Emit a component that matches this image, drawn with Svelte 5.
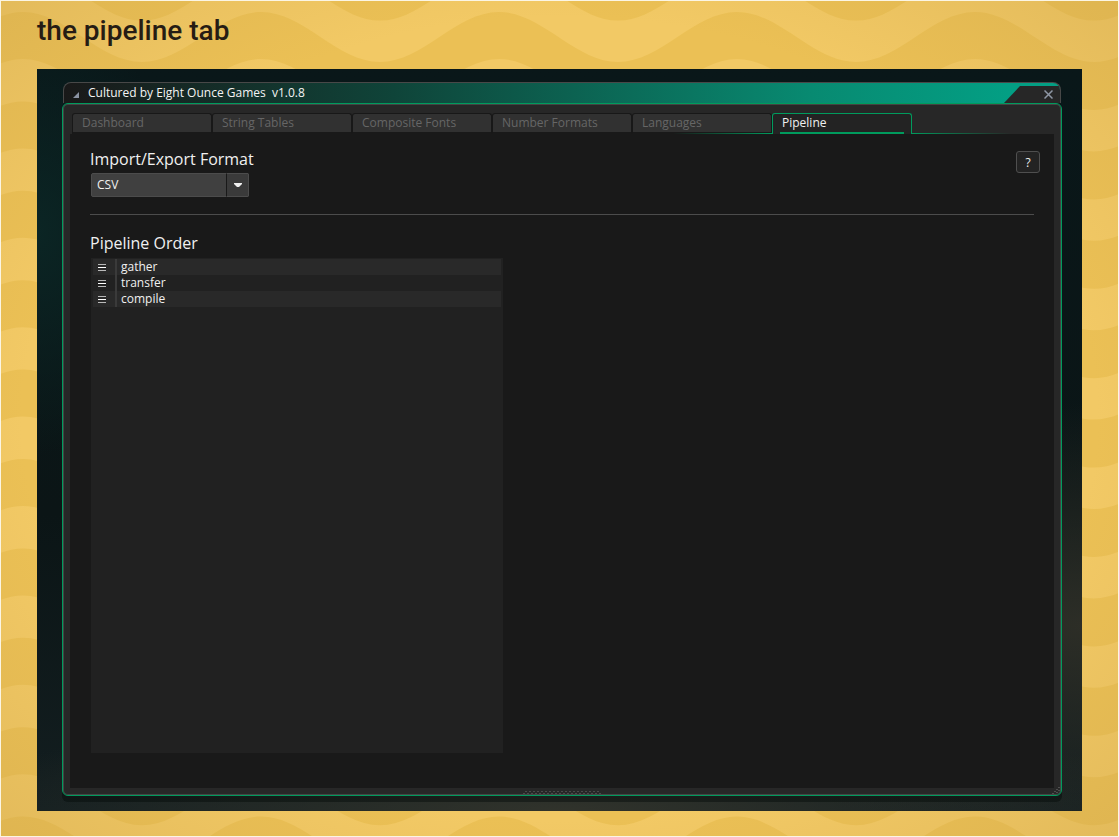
<script>
  const tabs = ['Dashboard', 'String Tables', 'Composite Fonts', 'Number Formats', 'Languages', 'Pipeline'];
  let active = $state('Pipeline');
  let format = $state('CSV');
  const steps = ['gather', 'transfer', 'compile'];

  const period = 238;
  const half = period / 2;

  // One wavy band: the upper edge runs left to right, the lower edge is a copy of it, shifted down.
  function edge(x0, crest, trough, count) {
    let d = '';
    for (let i = 0; i < count; i++) {
      const x = x0 + i * period;
      d += `C${x + 43} ${crest} ${x + half - 43} ${trough} ${x + half} ${trough}`;
      d += `C${x + half + 43} ${trough} ${x + period - 43} ${crest} ${x + period} ${crest}`;
    }
    return d;
  }
  function edgeBack(x1, crest, trough, count) {
    let d = '';
    for (let i = 0; i < count; i++) {
      const x = x1 - i * period;
      d += `C${x - 43} ${crest} ${x - half + 43} ${trough} ${x - half} ${trough}`;
      d += `C${x - half - 43} ${trough} ${x - period + 43} ${crest} ${x - period} ${crest}`;
    }
    return d;
  }
  const repeats = 14;
  const start = 23 - period;
  const end = start + repeats * period;
  const band = `M${start} 12${edge(start, 12, 62, repeats)}L${end} 59${edgeBack(end, 59, 110, repeats)}Z`;
  const bands = Array.from({ length: 26 }, (_, i) => (i - 1) * 89.4);
</script>

<div class="page">
  <svg class="waves" aria-hidden="true">
    {#each bands as y}
      <path d={band} transform={`translate(0 ${y})`} fill="#ebc055" />
    {/each}
  </svg>

  <h1>the pipeline tab</h1>

  <main class="stage">
    <section class="window">
      <header class="titlebar">
        <svg class="fold" width="6" height="6" viewBox="0 0 6 6" aria-hidden="true"><path d="M6 0V6H0Z" fill="#8b93a3" /></svg>
        <span class="caption">Cultured by Eight Ounce Games&nbsp; v1.0.8</span>
        <div class="corner">
          <button class="close" aria-label="Close">
            <svg width="9" height="9" viewBox="0 0 9 9"><path d="M.5.5L8.5 8.5M8.5.5L.5 8.5" stroke="#8f97a5" stroke-width="1.5" /></svg>
          </button>
        </div>
      </header>

      <div class="frame">
        <div class="tabs" role="tablist">
          {#each tabs as tab}
            <button class="tab" class:active={tab === active} role="tab" aria-selected={tab === active} onclick={() => (active = tab)}>{tab}</button>
          {/each}
        </div>

        <div class="panel">
          <div class="top">
            <div class="field">
              <label for="format">Import/Export Format</label>
              <div class="combo">
                <select id="format" bind:value={format}>
                  <option>CSV</option>
                  <option>JSON</option>
                </select>
                <span class="arrow">
                  <svg width="8" height="5" viewBox="0 0 8 5" aria-hidden="true"><path d="M0 0H8V1L5 4H3L0 1Z" fill="#f0f0f0" /></svg>
                </span>
              </div>
            </div>
            <button class="help" aria-label="Help">?</button>
          </div>

          <hr />

          <h2>Pipeline Order</h2>
          <ul class="order">
            {#each steps as step}
              <li>
                <button class="grip" aria-label={`Move ${step}`}>
                  <svg width="8" height="7" viewBox="0 0 8 7"><path d="M0 .5H8M0 6.5H8" stroke="#b9b9b9" /><path d="M0 3.5H8" stroke="#fff" /></svg>
                </button>
                <span>{step}</span>
              </li>
            {/each}
          </ul>
        </div>

        <svg class="grip-bottom" width="78" height="3" viewBox="0 0 78 3" aria-hidden="true">
          <path d="M2 .5H78" stroke="#4a4a4a" stroke-dasharray="2 2" />
          <path d="M0 2.5H78" stroke="#4a4a4a" stroke-dasharray="2 2" />
        </svg>
        <svg class="grip-corner" width="8" height="7" viewBox="0 0 8 7" aria-hidden="true">
          <path d="M6 0h2v1H6zM4 2h2v1H4zM2 4h2v1H2zM0 6h2v1H0zM6 3h2v1H6zM4 5h2v1H4z" fill="#4e4e4e" />
        </svg>
      </div>
    </section>
  </main>
</div>

<style>
  :global(body) {
    margin: 0;
  }
  .page {
    position: relative;
    isolation: isolate;
    box-sizing: border-box;
    min-height: 100vh;
    display: flex;
    flex-direction: column;
    padding: 0 37px 26px;
    background: #f2c965;
    font-family: "Open Sans", "Noto Sans", sans-serif;
    font-size: 12px;
    color: #f0f0f0;
  }
  .waves {
    position: absolute;
    inset: 0;
    width: 100%;
    height: 100%;
    z-index: -2;
  }
  .page::before {
    content: "";
    position: absolute;
    inset: 0;
    z-index: -1;
    border: 1px solid #fbf5e4;
    background: radial-gradient(ellipse at center, transparent 68%, rgba(205, 165, 75, 0.4) 100%);
  }
  button,
  select {
    font: inherit;
    color: inherit;
    margin: 0;
    padding: 0;
    border: 0;
    background: none;
  }
  h1 {
    margin: 0;
    height: 69px;
    line-height: 62px;
    font-family: Roboto, "Open Sans", sans-serif;
    font-weight: 500;
    font-size: 28px;
    color: #261c14;
  }
  .stage {
    flex: 1;
    display: flex;
    padding: 13px 20px 15px 25px;
    background:
      radial-gradient(ellipse 40% 30% at 100% 75%, rgba(48, 48, 40, 0.9), transparent),
      radial-gradient(ellipse 60% 14% at 50% 100%, rgba(50, 52, 44, 0.95), transparent),
      radial-gradient(ellipse 14% 30% at 0 22%, #0b2524, transparent),
      linear-gradient(#091719, #0b1516 60%, #131e20);
  }
  .window {
    flex: 1;
    min-width: 0;
    display: flex;
    flex-direction: column;
  }
  .titlebar {
    display: flex;
    align-items: center;
    height: 21px;
    box-sizing: border-box;
    margin: 0 1px;
    padding-left: 9px;
    border: 1px solid #484848;
    border-bottom: 0;
    border-radius: 8px 8px 0 0;
    background: linear-gradient(90deg, #191919, #0f4439 33%, #088a71 75%, #039f84 95%);
    overflow: hidden;
  }
  .fold {
    margin: 4px 9px 0 0;
  }
  .caption {
    flex: 1;
    line-height: 20px;
    color: #f4f4f4;
  }
  .corner {
    align-self: flex-end;
    display: flex;
    justify-content: flex-end;
    width: 56px;
    height: 17px;
    background: #272727;
    clip-path: polygon(16px 0, 100% 0, 100% 100%, 0 100%);
  }
  .close {
    display: flex;
    align-items: center;
    justify-content: center;
    width: 23px;
    height: 17px;
  }
  .frame {
    position: relative;
    flex: 1;
    display: flex;
    flex-direction: column;
    padding: 9px 7px 7px;
    border: 1px solid #009b5d;
    border-radius: 6px;
    background: #272727;
    box-shadow: inset 0 0 0 1px #444, 0 6px 0 rgba(5, 10, 8, 0.45);
  }
  .tabs {
    display: flex;
    height: 21px;
    padding: 0 2px;
  }
  .tab {
    position: relative;
    width: 140px;
    height: 21px;
    box-sizing: border-box;
    padding-left: 9px;
    text-align: left;
    line-height: 18px;
    color: #666;
    background: #313131;
    border: 1px solid #181818;
    border-radius: 3px 3px 0 0;
    border-bottom: 2px solid #191919;
  }
  .tab.active {
    padding-bottom: 2px;
    color: #f0f0f0;
    background: linear-gradient(#009b5d, #009b5d) 7px 100% / calc(100% - 14px) 2px no-repeat #232323;
    border-color: #009b5d;
    border-bottom: 0;
  }
  .tab.active::before,
  .tab.active::after {
    content: "";
    position: absolute;
    bottom: 0;
    height: 1px;
    width: 100px;
  }
  .tab.active::before {
    right: 100%;
    background: linear-gradient(90deg, transparent, #009b5d);
  }
  .tab.active::after {
    left: 100%;
    background: linear-gradient(270deg, transparent, #009b5d);
  }
  .panel {
    flex: 1;
    display: flex;
    flex-direction: column;
    padding: 13px 14px 35px 20px;
    background: #191919;
  }
  .top {
    display: flex;
    justify-content: space-between;
    align-items: flex-start;
  }
  .field {
    display: flex;
    flex-direction: column;
  }
  label,
  h2 {
    margin: 0;
    font-size: 16px;
    font-weight: 400;
    line-height: 24px;
  }
  .combo {
    display: grid;
    grid-template-columns: 135px 23px;
    height: 24px;
    margin: 2px 1px 1px;
  }
  select {
    grid-area: 1 / 1 / 2 / 3;
    appearance: none;
    box-sizing: border-box;
    padding: 0 0 2px 5px;
    border: 1px solid #4c4c4c;
    border-radius: 2px;
    background: #404040;
  }
  .arrow {
    grid-area: 1 / 2;
    display: flex;
    align-items: center;
    justify-content: center;
    border: 1px solid #4c4c4c;
    border-left: 1px solid #191919;
    border-radius: 0 2px 2px 0;
    background: #3a3a3a;
    pointer-events: none;
    box-sizing: border-box;
  }
  .help {
    width: 24px;
    height: 22px;
    margin-top: 4px;
    border: 1px solid #4f4f4f;
    border-radius: 3px;
    background: #232323;
  }
  hr {
    width: calc(100% - 6px);
    margin: 16px 6px 16px 0;
    border: 0;
    border-top: 1px solid #4c4c4c;
  }
  .order {
    flex: 1;
    box-sizing: border-box;
    width: 412px;
    max-width: 100%;
    margin: 3px 1px 0;
    padding: 1px 2px;
    list-style: none;
    background: #212121;
    font-size: 12px;
  }
  li {
    display: flex;
    height: 16px;
    line-height: 16px;
  }
  li:nth-child(odd) {
    background: #292929;
  }
  .grip {
    display: flex;
    align-items: center;
    width: 24px;
    box-sizing: border-box;
    padding-left: 5px;
    margin-right: 4px;
    border-right: 2px solid #3a3a3a;
  }
  .grip-bottom {
    position: absolute;
    bottom: 1px;
    left: 50%;
    margin-left: -39px;
  }
  .grip-corner {
    position: absolute;
    right: 1px;
    bottom: 1px;
  }
</style>
